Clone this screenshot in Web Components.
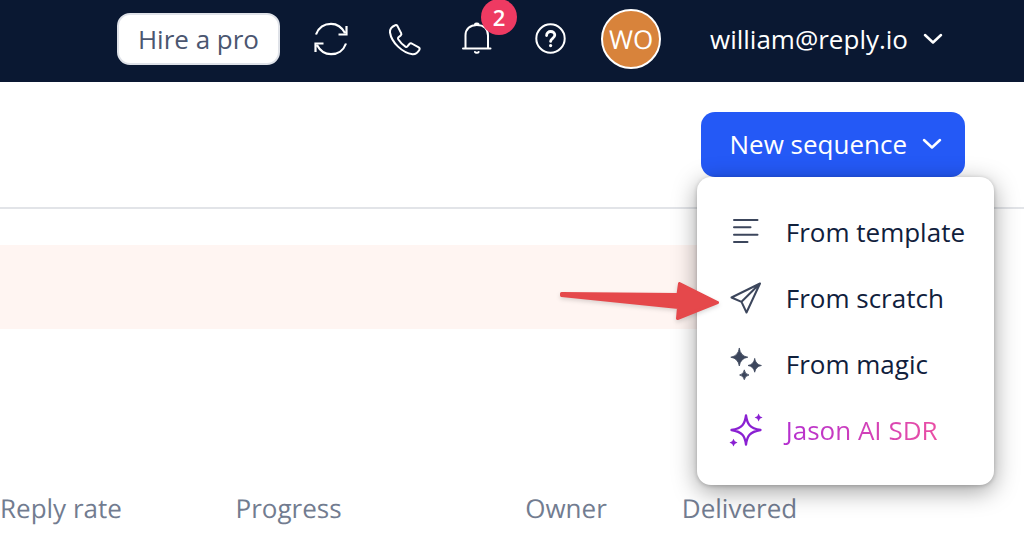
<!DOCTYPE html>
<html lang="en">
<head>
<meta charset="utf-8">
<meta name="viewport" content="width=device-width, initial-scale=1">
<title>Sequences</title>
<style>
  body {
    margin: 0;
    background: #fff;
    color: #10203c;
    font: 26px/36px "Open Sans", "Noto Sans", sans-serif;
    text-rendering: geometricPrecision;
  }
</style>
</head>
<body>
<app-shell>
  <top-bar slot="top" initials="WO" email="william@reply.io" notifications="2"></top-bar>
  <page-toolbar>
    <sequence-menu label="New sequence">
      <menu-entry icon="lines">From template</menu-entry>
      <menu-entry icon="plane" pointed>From scratch</menu-entry>
      <menu-entry icon="stars">From magic</menu-entry>
      <menu-entry icon="sparkle" accent>Jason AI SDR</menu-entry>
    </sequence-menu>
  </page-toolbar>
  <notice-band></notice-band>
  <sequence-table columns="Reply rate,Progress,Owner,Delivered"></sequence-table>
</app-shell>

<script>
const icons = {
  refresh: `<path d="M2 12.500C4.500 5.500 10.500 1.800 17 1.800c6 0 11 3.500 14 9.200M32.500 4v8.500h-8M32 21.500c-2.500 7-8.500 10.700-15 10.700-6 0-11-3.500-14-9.200M1.500 30v-8.500h8" stroke-width="2.200" stroke-linecap="butt" stroke-linejoin="miter"/>`,
  phone: `<path d="M8.200 3.200C5 4.500 2.500 6 3 10.500 4.500 20.500 15.500 31 25.500 32.200c4 .3 5.500-2 6.900-4.500.5-1 .3-1.700-.7-2.300l-7-3.900c-1-.5-1.700-.3-2.300.5l-2 2.400c-.6.700-1.200.7-2 .2-3-2-5.400-4.500-7.200-7.300-.5-.8-.4-1.400.3-2l2.200-1.900c.8-.7 1-1.300.4-2.300L10.400 3.900c-.6-.9-1.300-1.100-2.200-.7Z"/>`,
  bell: `<path d="M3 26.500h27.500M5.500 26.500V13.500C5.500 7 10 3 16.800 3S28 7 28 13.500v13M15 2.200c.5-1 3.100-1 3.600 0M15 30c.5 1 3.100 1 3.600 0"/>`,
  help: `<circle cx="17.500" cy="16.500" r="14.200"/><path d="M13.600 13.500c0-5.300 8.200-5.200 8.200-.4 0 3.200-4 3.200-4.200 6.300" stroke-width="2.800"/><circle cx="17.600" cy="23.600" r="1.600" fill="currentColor" stroke="none"/>`,
  chevron: `<path d="M9 13l8 7.500 8-7.500" stroke-width="2.500"/>`,
  lines: `<path d="M5 5h23.500M5 12.300h16.500M5 19.700h23.500M5 27h13.500"/>`,
  plane: `<path d="M31 2.500 2.500 16.500l10 4.300 5 10.700L31 2.500ZM31 2.500 12.500 20.800"/>`,
  stars: `<g fill="currentColor" stroke="none"><path d="M10.300 1.400Q11.500 9 18.800 10.200 11.500 11.400 10.300 19 9.100 11.400 1.800 10.200 9.100 9 10.300 1.400Z" stroke="currentColor" stroke-width=".8"/><path d="M25.700 11.800Q26.700 17.500 32.400 18.500 26.700 19.500 25.700 25.200 24.700 19.500 19 18.500 24.700 17.500 25.700 11.800Z" stroke="currentColor" stroke-width=".8"/><path d="M15.300 23.300Q16 27.300 20 28 16 28.700 15.300 32.700 14.600 28.700 10.600 28 14.600 27.300 15.300 23.300Z" stroke="currentColor" stroke-width=".8"/></g>`,
  sparkle: `<path d="M17 2.500c1.200 8.500 3.500 12.500 14.500 14.500-11 2-13.300 6-14.500 14.500C15.800 23 13.500 19 2.500 17 13.500 15 15.800 11 17 2.500Z" stroke-width="2.300"/><g fill="currentColor" stroke="none"><path d="M29.600.6l1.300 2.600 2.700 1.300-2.700 1.300-1.300 2.700-1.300-2.700-2.700-1.300 2.700-1.300Z"/><path d="M4.500 25.700l1.300 2.600 2.700 1.300-2.700 1.300-1.300 2.700-1.300-2.700-2.700-1.300 2.700-1.300Z"/></g>`
}

class UiIcon extends HTMLElement {
  connectedCallback() {
    const root = this.attachShadow({ mode: 'open' })

    root.innerHTML = `
      <style>
        :host { display: block; flex: none; width: 34px; height: 34px; }
        svg { display: block; overflow: visible; }
      </style>
      <svg width="34" height="34" viewBox="0 0 34 34" fill="none" stroke="currentColor"
        stroke-width="2" stroke-linecap="round" stroke-linejoin="round" aria-hidden="true">
        ${icons[this.getAttribute('name')]}
      </svg>
    `
  }
}

class AppShell extends HTMLElement {
  connectedCallback() {
    this.attachShadow({ mode: 'open' }).innerHTML = `
      <style>
        :host { display: flex; flex-direction: column; min-height: 100vh; overflow-x: clip; }
        main { display: flex; flex-direction: column; }
      </style>
      <slot name="top"></slot>
      <main><slot></slot></main>
    `
  }
}

class TopBar extends HTMLElement {
  connectedCallback() {
    const email = this.getAttribute('email')
    const initials = this.getAttribute('initials')
    const count = this.getAttribute('notifications')

    this.attachShadow({ mode: 'open' }).innerHTML = `
      <style>
        :host { display: block; background: #0a1832; color: #fff; }
        header, nav, .account { display: flex; align-items: center; }
        header { justify-content: flex-end; gap: 34px; padding: 9px 74px 13px; }
        nav { gap: 39px; }
        button { border: 0; padding: 0; background: none; color: inherit; font: inherit; cursor: pointer; white-space: nowrap; }
        .hire { box-sizing: border-box; padding: 6px 19px; border: 2px solid #dfe2e8; border-radius: 13px; background: #fff; color: #4b5670; }
        .bell { position: relative; }
        .badge { position: absolute; left: 21px; top: -23px; width: 36px; height: 36px; border-radius: 50%; background: #ee3a62; font-size: 22px; font-weight: 600; text-align: center; }
        .account { gap: 49px; }
        .avatar { box-sizing: border-box; width: 60px; height: 60px; border: 2px solid #fff; border-radius: 50%; background: #d8833b; line-height: 56px; text-align: center; }
        .email { display: flex; align-items: center; gap: 8px; }
      </style>
      <header>
        <button class="hire" type="button">Hire a pro</button>
        <nav aria-label="Tools">
          <button type="button" aria-label="Refresh"><ui-icon name="refresh"></ui-icon></button>
          <button type="button" aria-label="Calls"><ui-icon name="phone"></ui-icon></button>
          <button class="bell" type="button" aria-label="Notifications"><ui-icon name="bell"></ui-icon><span class="badge">${count}</span></button>
          <button type="button" aria-label="Help"><ui-icon name="help"></ui-icon></button>
        </nav>
        <div class="account">
          <span class="avatar">${initials}</span>
          <button class="email" type="button">${email}<ui-icon name="chevron"></ui-icon></button>
        </div>
      </header>
    `
  }
}

class PageToolbar extends HTMLElement {
  connectedCallback() {
    this.attachShadow({ mode: 'open' }).innerHTML = `
      <style>
        :host { display: flex; justify-content: flex-end; padding: 30px 59px; border-bottom: 2px solid #e2e4e8; }
      </style>
      <slot></slot>
    `
  }
}

class SequenceMenu extends HTMLElement {
  connectedCallback() {
    const root = this.attachShadow({ mode: 'open' })

    root.innerHTML = `
      <style>
        :host { display: block; position: relative; }
        button { display: flex; align-items: center; gap: 8px; padding: 14px 16px 15px 28px; border: 0; border-radius: 14px; background: #2459f6; color: #fff; font: inherit; white-space: nowrap; cursor: pointer; }
        .menu { position: absolute; z-index: 1; top: 100%; right: -29px; padding: 22px 0; border-radius: 14px; background: #fff; box-shadow: 0 6px 24px rgba(0, 0, 0, .38), 0 1px 4px rgba(0, 0, 0, .2); }
        .menu[hidden] { display: none; }
      </style>
      <button type="button" aria-haspopup="menu" aria-expanded="true">${this.getAttribute('label')}<ui-icon name="chevron"></ui-icon></button>
      <div class="menu" role="menu"><slot></slot></div>
    `

    const button = root.querySelector('button')
    const menu = root.querySelector('.menu')

    button.addEventListener('click', () => {
      menu.hidden = !menu.hidden
      button.setAttribute('aria-expanded', String(!menu.hidden))
    })
  }
}

class MenuEntry extends HTMLElement {
  connectedCallback() {
    // the arrow hangs off the left side of a pointed entry
    const arrow = this.hasAttribute('pointed')
      ? `<svg class="arrow" width="164" height="48" viewBox="0 0 164 48" aria-hidden="true">
          <path d="M4.500 16.500 121 17.500 122.500 6.500 160.500 25.500 120.500 41.500 121.500 30.500 4.500 18.500Z" fill="#e5484b" stroke="#e5484b" stroke-width="3" stroke-linejoin="round"/>
        </svg>`
      : ''

    this.attachShadow({ mode: 'open' }).innerHTML = `
      <style>
        :host { display: block; position: relative; }
        button { display: flex; align-items: center; gap: 20px; width: 100%; padding: 15px 29px 15px 32px; border: 0; background: none; color: inherit; font: inherit; white-space: nowrap; cursor: pointer; }
        ui-icon { color: #3c465c; }
        .label { padding-left: 3px; }
        :host([accent]) ui-icon { color: #8a20d2; }
        :host([accent]) .label { background: linear-gradient(90deg, #b42fd0, #ea4fa4); background-clip: text; -webkit-background-clip: text; color: transparent; }
        .arrow { position: absolute; right: calc(100% - 24px); top: 12px; filter: drop-shadow(0 2px 2px rgba(0, 0, 0, .15)); pointer-events: none; }
      </style>
      <button type="button" role="menuitem">
        <ui-icon name="${this.getAttribute('icon')}"></ui-icon>
        <span class="label"><slot></slot></span>
      </button>
      ${arrow}
    `
  }
}

class NoticeBand extends HTMLElement {
  connectedCallback() {
    this.attachShadow({ mode: 'open' }).innerHTML = `
      <style>
        :host { display: block; height: 84px; margin: 36px 59px 0 0; background: #fff5f2; }
      </style>
      <slot></slot>
    `
  }
}

class SequenceTable extends HTMLElement {
  connectedCallback() {
    const heads = this.getAttribute('columns').split(',')

    this.attachShadow({ mode: 'open' }).innerHTML = `
      <style>
        :host { display: block; margin-top: 161px; color: #727c90; }
        table { width: 100%; table-layout: fixed; border-collapse: collapse; }
        th { padding: 0; font-weight: 400; text-align: left; white-space: nowrap; }
        th:nth-child(1) { width: 23%; }
        th:nth-child(2) { width: 28%; }
        th:nth-child(3) { width: 15%; }
        th:nth-child(n + 3) { padding-left: 3px; }
      </style>
      <table>
        <thead><tr>${heads.map(head => `<th scope="col">${head}</th>`).join('')}</tr></thead>
      </table>
    `
  }
}

customElements.define('ui-icon', UiIcon)
customElements.define('app-shell', AppShell)
customElements.define('top-bar', TopBar)
customElements.define('page-toolbar', PageToolbar)
customElements.define('sequence-menu', SequenceMenu)
customElements.define('menu-entry', MenuEntry)
customElements.define('notice-band', NoticeBand)
customElements.define('sequence-table', SequenceTable)
</script>
</body>
</html>
